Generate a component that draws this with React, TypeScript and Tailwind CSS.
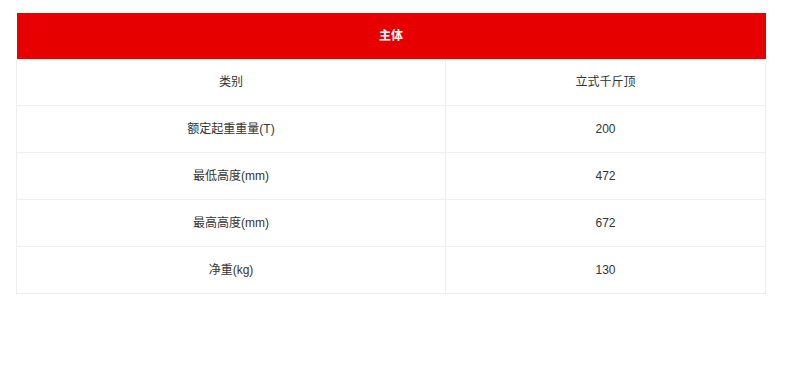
const rows = [
  ['类别', '立式千斤顶'],
  ['额定起重重量(T)', '200'],
  ['最低高度(mm)', '472'],
  ['最高高度(mm)', '672'],
  ['净重(kg)', '130'],
];

export default function App() {
  return (
    <div className="w-[800px] h-[375px] bg-white pt-[13px] pl-[16px] font-['Liberation_Sans','Noto_Sans_CJK_SC',sans-serif] text-[12px] text-[#333]">
      <table className="w-[750px] border-collapse table-fixed">
        <colgroup>
          <col className="w-[429px]" />
          <col />
        </colgroup>
        <thead>
          <tr>
            <th
              colSpan={2}
              className="h-[46px] p-0 bg-[#e60000] text-white font-bold text-[12px] text-center"
            >
              主体
            </th>
          </tr>
        </thead>
        <tbody>
          {rows.map(([k, v], i) => (
            <tr key={k} className={i === 0 ? 'h-[46px]' : 'h-[47px]'}>
              <td className="p-0 text-center border border-[#eeeeee]">{k}</td>
              <td className="p-0 text-center border border-[#eeeeee]">{v}</td>
            </tr>
          ))}
        </tbody>
      </table>
    </div>
  );
}
